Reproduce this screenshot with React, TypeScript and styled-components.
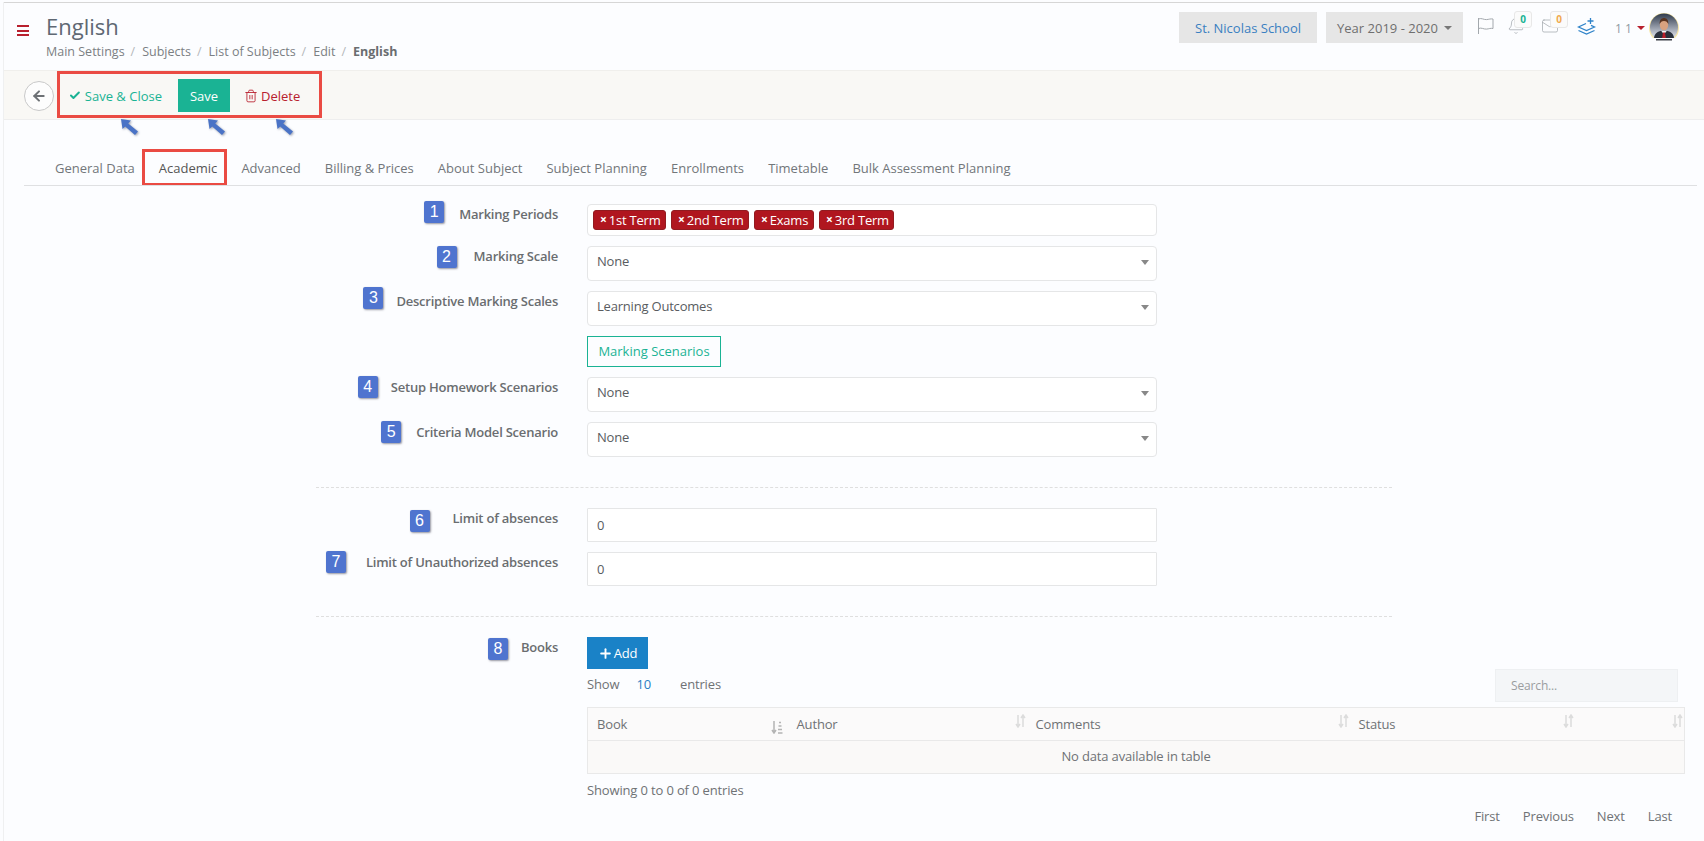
import React from "react";
import styled, { createGlobalStyle } from "styled-components";
import { Check, Trash2, ArrowLeft, Plus, Bell, Mail } from "lucide-react";

const GlobalStyle = createGlobalStyle`
  html, body {
    margin: 0;
    padding: 0;
    height: 100%;
    overflow: hidden;
    background: #fcfdff;
  }
  * { box-sizing: border-box; }
`;

const Page = styled.div`
  width: 1704px;
  height: 841px;
  overflow: hidden;
  position: relative;
  border-left: 1px solid #eff0f1;
  margin-left: 3px;
  margin-top: 2px;
  font-family: "Open Sans", "Liberation Sans", sans-serif;
  font-size: 13px;
  color: #676a6c;
  &::before {
    content: "";
    position: absolute;
    top: 0;
    left: -4px;
    width: 1710px;
    height: 1px;
    background: #d6d6d6;
  }
`;

const Header = styled.header`
  height: 68px;
  padding: 10px 28px 0 13px;
  display: flex;
  justify-content: space-between;
  align-items: flex-start;
`;

const TitleArea = styled.div`
  display: flex;
  gap: 17px;
`;

const Burger = styled.div`
  width: 12px;
  height: 11px;
  margin-top: 13px;
  border-top: 2px solid #b8202e;
  border-bottom: 2px solid #b8202e;
  position: relative;
  &::after {
    content: "";
    position: absolute;
    left: 0;
    right: 0;
    top: 2.5px;
    height: 2px;
    background: #b8202e;
  }
`;

const Title = styled.h1`
  margin: 1px 0 0;
  font-size: 22px;
  font-weight: 400;
  line-height: 27px;
  color: #5f6873;
`;

const Crumbs = styled.div`
  display: flex;
  margin-top: 2px;
  font-size: 12.5px;
  line-height: 20px;
  color: #7b7f83;
`;

const Crumb = styled.span<{ $last?: boolean }>`
  font-weight: ${(p) => (p.$last ? 700 : 400)};
  color: ${(p) => (p.$last ? "#6a6d70" : "#7b7f83")};
  &:not(:last-child)::after {
    content: "/";
    margin: 0 7px 0 6px;
    color: #b5b8bb;
  }
`;

const HeaderRight = styled.div`
  display: flex;
  align-items: flex-start;
`;

const Pill = styled.div<{ $blue?: boolean }>`
  width: ${(p) => (p.$blue ? 138 : 137)}px;
  height: 31px;
  margin-right: 9px;
  background: #e6e6e6;
  display: flex;
  align-items: center;
  justify-content: center;
  gap: 6px;
  color: ${(p) => (p.$blue ? "#3a7fc1" : "#6f6f6f")};
`;

const SmallCaret = styled.span<{ $color?: string }>`
  width: 0;
  height: 0;
  border-left: 4px solid transparent;
  border-right: 4px solid transparent;
  border-top: 4px solid ${(p) => p.$color || "#777"};
`;

const IconSlot = styled.div<{ $w: number; $gap: number }>`
  position: relative;
  width: ${(p) => p.$w}px;
  margin-left: ${(p) => p.$gap}px;
  height: 24px;
  margin-top: 5px;
  color: #a3a8ad;
`;

const Count = styled.span<{ $color: string; $left: number }>`
  position: absolute;
  top: -6px;
  left: ${(p) => p.$left}px;
  width: 18px;
  height: 17px;
  border: 1px solid #e8e8e8;
  border-radius: 3px;
  background: #fbfbfb;
  color: ${(p) => p.$color};
  font-size: 10px;
  font-weight: 700;
  line-height: 15px;
  text-align: center;
`;

const UserMenu = styled.div`
  display: flex;
  align-items: center;
  height: 30px;
  margin-top: 1px;
  margin-left: 19px;
  color: #8f9aa3;
`;

const UserCount = styled.span`
  width: 17px;
  margin-right: 5px;
  font-size: 12px;
  white-space: nowrap;
`;

const AvatarFrame = styled.span`
  margin-left: 4px;
  height: 30px;
`;

const Toolbar = styled.div`
  height: 50px;
  padding-left: 20px;
  background: #f9f8f5;
  border-top: 1px solid #f0efec;
  border-bottom: 1px solid #eeeeee;
  display: flex;
  gap: 3px;
`;

const BackButton = styled.div`
  width: 30px;
  height: 30px;
  margin-top: 10px;
  border: 1px solid #c9c9c9;
  border-radius: 50%;
  background: #fdfdfd;
  color: #6d7175;
  display: flex;
  align-items: center;
  justify-content: center;
`;

const ActionBox = styled.div`
  position: relative;
  width: 265px;
  height: 47px;
  padding: 5px 0 0 9px;
  border: 3px solid #ea4b43;
  display: flex;
  align-items: flex-start;
`;

const LinkAction = styled.div<{ $color: string; $w: number }>`
  width: ${(p) => p.$w}px;
  height: 33px;
  display: flex;
  align-items: center;
  gap: 3px;
  white-space: nowrap;
  color: ${(p) => p.$color};
`;

const CheckMark = styled(Check)`
  margin-right: 1px;
`;

const SaveButton = styled.div`
  width: 52px;
  height: 33px;
  margin: 0 14px 0 16px;
  background: #1ab394;
  color: #fff;
  display: flex;
  align-items: center;
  justify-content: center;
`;

const Pointer = styled.svg<{ $x: number }>`
  position: absolute;
  left: ${(p) => p.$x}px;
  top: 44px;
  filter: drop-shadow(1px 1px 1px rgba(40, 50, 80, 0.45));
`;

const TabBar = styled.nav`
  margin: 29px 10px 0 20px;
  padding-left: 31px;
  height: 37px;
  border-bottom: 1px solid #dfe0e2;
  display: flex;
  gap: 24.1px;
`;

const Tab = styled.div<{ $active?: boolean }>`
  position: relative;
  height: 36px;
  line-height: 38px;
  white-space: nowrap;
  color: ${(p) => (p.$active ? "#555" : "#72767a")};
  ${(p) =>
    p.$active &&
    `&::after {
      content: "";
      position: absolute;
      inset: 0 -10px 0 -17px;
      border: 3px solid #ea4b43;
      border-bottom-width: 2px;
    }`}
`;

const Row = styled.div<{ $top: number }>`
  display: flex;
  margin-top: ${(p) => p.$top}px;
`;

const LabelCell = styled.div`
  width: 554px;
  margin-right: 29px;
  display: flex;
  justify-content: flex-end;
  align-items: flex-start;
`;

const NumberBadge = styled.span<{ $shift: number; $gap: number }>`
  width: 20px;
  height: 22px;
  margin-top: ${(p) => p.$shift}px;
  margin-right: ${(p) => p.$gap}px;
  border-radius: 2px;
  background: #4f74cf;
  box-shadow: 1px 1px 2px rgba(50, 50, 70, 0.5);
  color: #fff;
  font-family: "Liberation Sans", Arial, sans-serif;
  font-size: 16px;
  line-height: 21px;
  text-align: center;
`;

const Label = styled.label`
  font-weight: 600;
  line-height: 20px;
  letter-spacing: -0.22px;
  color: #6a6d70;
  white-space: nowrap;
`;

const Control = styled.div<{ $h: number; $select?: boolean }>`
  position: relative;
  width: 570px;
  height: ${(p) => p.$h}px;
  padding: ${(p) => (p.$select ? "0 0 5px 9px" : "0 0 0 9px")};
  background: #fff;
  border: 1px solid #e5e6e7;
  border-radius: ${(p) => (p.$select ? 4 : 1)}px;
  display: flex;
  align-items: center;
  letter-spacing: -0.2px;
  color: #595c5f;
`;

const SelectCaret = styled(SmallCaret)`
  position: absolute;
  right: 7px;
  top: 13px;
  border-top-width: 5px;
  border-top-color: #888;
`;

const TagList = styled.div`
  display: flex;
  gap: 5px;
  margin: 0 0 -5px -4px;
`;

const Tag = styled.span<{ $w: number }>`
  width: ${(p) => p.$w}px;
  height: 20px;
  padding-left: 6px;
  background: #b0161f;
  border: 1px solid #921b20;
  border-radius: 3px;
  color: #fff;
  line-height: 18px;
  display: flex;
  gap: 2px;
  white-space: nowrap;
  &::before {
    content: "×";
    font-weight: 700;
    font-size: 12px;
  }
`;

const OutlineButton = styled.div`
  width: 134px;
  height: 31px;
  margin-left: 583px;
  padding-bottom: 1px;
  border: 1px solid #1ab394;
  color: #1ab394;
  display: flex;
  align-items: center;
  justify-content: center;
`;

const Divider = styled.hr<{ $top: number }>`
  width: 1076px;
  margin: ${(p) => p.$top}px 0 0 312px;
  border: 0;
  border-top: 1px dashed #dfdfdf;
`;

const BooksPanel = styled.div`
  width: 1097px;
  letter-spacing: -0.15px;
`;

const AddButton = styled.div`
  width: 61px;
  height: 32px;
  background: #1a82c7;
  color: #fff;
  display: flex;
  align-items: center;
  justify-content: center;
  gap: 1px;
`;

const ListTools = styled.div`
  height: 33px;
  padding-right: 6px;
  display: flex;
  align-items: center;
  justify-content: space-between;
`;

const ShowEntries = styled.div`
  display: flex;
  margin-bottom: 4px;
  color: #6f7275;
`;

const PageSize = styled.span`
  margin: 0 29px 0 17px;
  color: #2a7fc4;
`;

const SearchBox = styled.div`
  width: 183px;
  height: 33px;
  padding-left: 15px;
  background: #f4f6f8;
  border: 1px solid #eef0f2;
  color: #9a9da0;
  font-size: 12px;
  display: flex;
  align-items: center;
`;

const BooksTable = styled.table`
  width: 1097px;
  margin-top: 5px;
  border-collapse: collapse;
  table-layout: fixed;
`;

const HeadCell = styled.th<{ $w: number }>`
  position: relative;
  width: ${(p) => p.$w}px;
  height: 33px;
  padding: 0 0 0 9px;
  background: #fbfafa;
  border: 1px solid #e9e9e9;
  border-width: 1px 0;
  font-weight: 400;
  text-align: left;
  color: #6f7275;
  &:first-child { border-left-width: 1px; }
  &:last-child { border-right-width: 1px; }
`;

const SortGlyph = styled.svg<{ $faint?: boolean }>`
  position: absolute;
  right: ${(p) => (p.$faint ? 1 : 5)}px;
  top: ${(p) => (p.$faint ? 6 : 13)}px;
  color: ${(p) => (p.$faint ? "#dcdcdc" : "#b4b4b4")};
`;

const EmptyCell = styled.td`
  height: 33px;
  padding: 0 0 2px;
  background: #faf9f8;
  border: 1px solid #e9e9e9;
  text-align: center;
  color: #6f7275;
`;

const TableInfo = styled.div`
  margin-top: 6px;
  line-height: 20px;
  color: #6f7275;
`;

const Pager = styled.div`
  margin-top: 6px;
  padding-right: 12px;
  line-height: 20px;
  display: flex;
  justify-content: flex-end;
  gap: 23px;
  color: #6f7275;
`;

const FlagIcon = () => (
  <svg width="18" height="18" viewBox="0 0 18 18" fill="none" stroke="currentColor" strokeWidth="1">
    <path d="M1.5 1v16M1.5 2c3-1.4 5 .8 8 .6 2.500-.2 4-1 6.500-.6v9.500c-2.500-.6-4 .4-6.500.6-3 .2-5-1.800-8-.6" />
  </svg>
);

const LayersPlus = () => (
  <svg width="19" height="19" viewBox="0 0 19 19" fill="none" stroke="#2f83c9" strokeWidth="1.3">
    <path d="M9 6.500 1.500 10 9.500 13.500 17.500 10 14 8.300M1.500 13.500l8 3.500 8-3.500M13.500 1v6M10.500 4h6" />
  </svg>
);

const Avatar = () => (
  <svg width="30" height="30" viewBox="0 0 30 30">
    <defs>
      <linearGradient id="avatarSky" x1="0" y1="0" x2="0" y2="1">
        <stop offset="0" stopColor="#2f3a4c" />
        <stop offset="0.75" stopColor="#c9ced8" />
        <stop offset="1" stopColor="#f4f5f8" />
      </linearGradient>
    </defs>
    <circle cx="15" cy="15" r="15" fill="#f7e7a6" />
    <circle cx="15" cy="14.500" r="14" fill="url(#avatarSky)" />
    <path d="M5 25c.6-5.500 5-7.500 10-7.500s9.400 2 10 7.500z" fill="#2a313c" />
    <path d="M12 17.500h6l-3 4z" fill="#f2f2f2" />
    <path d="M14 19.500h2l.8 5.500H13.200z" fill="#b81f2a" />
    <ellipse cx="15" cy="12" rx="4.200" ry="5.200" fill="#d9a27f" />
    <path d="M10.700 11c-.4-4 1.900-6 4.300-6s4.700 2 4.300 6c-1-2-1.900-3-4.300-3s-3.300 1-4.300 3z" fill="#5a3420" />
    <rect x="4" y="25" width="22" height="5" fill="#fcfdff" />
    <rect x="7" y="26" width="16" height="1.500" fill="#3b3f47" />
  </svg>
);

const SortIcon = ({ faint }: { faint?: boolean }) =>
  faint ? (
    <SortGlyph $faint width="11" height="14" viewBox="0 0 11 14" fill="none" stroke="currentColor" strokeWidth="1.500">
      <path d="M3 1v11M1 10l2 3 2-3M8 13V2M6 4l2-3 2 3" />
    </SortGlyph>
  ) : (
    <SortGlyph width="12" height="13" viewBox="0 0 12 13" fill="none" stroke="currentColor" strokeWidth="1.500">
      <path d="M3 0v11M1 9l2 3 2-3M8 1.500h2M7.500 5h3M7 8.500h4M7 12h4.500" />
    </SortGlyph>
  );

const ArrowPointer = ({ x }: { x: number }) => (
  <Pointer $x={x} width="20" height="20" viewBox="0 0 20 20">
    <path d="M1 1 11 2.500 8.200 5.500 18 13.500 15 17 5.200 8.500 2.500 11z" fill="#4a73c6" />
  </Pointer>
);

const headColumns = [
  { name: "Book", w: 200 },
  { name: "Author", w: 239 },
  { name: "Comments", w: 323 },
  { name: "Status", w: 225 },
  { name: "", w: 110 },
];

const tabs = [
  "General Data",
  "Academic",
  "Advanced",
  "Billing & Prices",
  "About Subject",
  "Subject Planning",
  "Enrollments",
  "Timetable",
  "Bulk Assessment Planning",
];

const App: React.FC = () => {
  return (
    <Page>
      <GlobalStyle />
      <Header>
        <TitleArea>
          <Burger />
          <div>
            <Title>English</Title>
            <Crumbs>
              <Crumb>Main Settings</Crumb>
              <Crumb>Subjects</Crumb>
              <Crumb>List of Subjects</Crumb>
              <Crumb>Edit</Crumb>
              <Crumb $last>English</Crumb>
            </Crumbs>
          </div>
        </TitleArea>
        <HeaderRight>
          <Pill $blue>St. Nicolas School</Pill>
          <Pill>
            Year 2019 - 2020 <SmallCaret />
          </Pill>
          <IconSlot $w={18} $gap={5}>
            <FlagIcon />
          </IconSlot>
          <IconSlot $w={18} $gap={12}>
            <Bell size={18} strokeWidth={1} />
            <Count $color="#1ab394" $left={7}>0</Count>
          </IconSlot>
          <IconSlot $w={18} $gap={16}>
            <Mail size={18} strokeWidth={1} />
            <Count $color="#f0a94e" $left={9}>0</Count>
          </IconSlot>
          <IconSlot $w={19} $gap={18}>
            <LayersPlus />
          </IconSlot>
          <UserMenu>
            <UserCount>1 1</UserCount>
            <SmallCaret $color="#b8202e" />
            <AvatarFrame>
              <Avatar />
            </AvatarFrame>
          </UserMenu>
        </HeaderRight>
      </Header>

      <Toolbar>
        <BackButton>
          <ArrowLeft size={16} strokeWidth={3} />
        </BackButton>
        <ActionBox>
          <LinkAction $color="#1ab394" $w={93}>
            <CheckMark size={15} strokeWidth={4} />
            Save &amp; Close
          </LinkAction>
          <SaveButton>Save</SaveButton>
          <LinkAction $color="#b8202e" $w={60}>
            <Trash2 size={14} strokeWidth={1.5} />
            Delete
          </LinkAction>
          <ArrowPointer x={60} />
          <ArrowPointer x={147} />
          <ArrowPointer x={215} />
        </ActionBox>
      </Toolbar>

      <TabBar>
        {tabs.map((t) => (
          <Tab key={t} $active={t === "Academic"}>
            {t}
          </Tab>
        ))}
      </TabBar>

      <Row $top={18}>
        <LabelCell>
          <NumberBadge $shift={-3} $gap={15}>1</NumberBadge>
          <Label>Marking Periods</Label>
        </LabelCell>
        <Control $h={32} $select>
          <TagList>
            <Tag $w={73}>1st Term</Tag>
            <Tag $w={78}>2nd Term</Tag>
            <Tag $w={60}>Exams</Tag>
            <Tag $w={75}>3rd Term</Tag>
          </TagList>
        </Control>
      </Row>

      <Row $top={10}>
        <LabelCell>
          <NumberBadge $shift={0} $gap={17}>2</NumberBadge>
          <Label>Marking Scale</Label>
        </LabelCell>
        <Control $h={35} $select>
          None
          <SelectCaret />
        </Control>
      </Row>

      <Row $top={10}>
        <LabelCell>
          <NumberBadge $shift={-4} $gap={13}>3</NumberBadge>
          <Label>Descriptive Marking Scales</Label>
        </LabelCell>
        <Control $h={35} $select>
          Learning Outcomes
          <SelectCaret />
        </Control>
      </Row>

      <Row $top={10}>
        <OutlineButton>Marking Scenarios</OutlineButton>
      </Row>

      <Row $top={10}>
        <LabelCell>
          <NumberBadge $shift={-1} $gap={13}>4</NumberBadge>
          <Label>Setup Homework Scenarios</Label>
        </LabelCell>
        <Control $h={35} $select>
          None
          <SelectCaret />
        </Control>
      </Row>

      <Row $top={10}>
        <LabelCell>
          <NumberBadge $shift={-1} $gap={15}>5</NumberBadge>
          <Label>Criteria Model Scenario</Label>
        </LabelCell>
        <Control $h={35} $select>
          None
          <SelectCaret />
        </Control>
      </Row>

      <Divider $top={30} />

      <Row $top={20}>
        <LabelCell>
          <NumberBadge $shift={2} $gap={23}>6</NumberBadge>
          <Label>Limit of absences</Label>
        </LabelCell>
        <Control $h={34}>0</Control>
      </Row>

      <Row $top={10}>
        <LabelCell>
          <NumberBadge $shift={-1} $gap={20}>7</NumberBadge>
          <Label>Limit of Unauthorized absences</Label>
        </LabelCell>
        <Control $h={34}>0</Control>
      </Row>

      <Divider $top={30} />

      <Row $top={20}>
        <LabelCell>
          <NumberBadge $shift={1} $gap={13}>8</NumberBadge>
          <Label>Books</Label>
        </LabelCell>
        <BooksPanel>
          <AddButton>
            <Plus size={15} strokeWidth={3} />
            Add
          </AddButton>
          <ListTools>
            <ShowEntries>
              Show
              <PageSize>10</PageSize>
              entries
            </ShowEntries>
            <SearchBox>Search...</SearchBox>
          </ListTools>
          <BooksTable>
            <thead>
              <tr>
                {headColumns.map((c, i) => (
                  <HeadCell key={i} $w={c.w}>
                    {c.name}
                    <SortIcon faint={i > 0} />
                  </HeadCell>
                ))}
              </tr>
            </thead>
            <tbody>
              <tr>
                <EmptyCell colSpan={5}>No data available in table</EmptyCell>
              </tr>
            </tbody>
          </BooksTable>
          <TableInfo>Showing 0 to 0 of 0 entries</TableInfo>
          <Pager>
            <span>First</span>
            <span>Previous</span>
            <span>Next</span>
            <span>Last</span>
          </Pager>
        </BooksPanel>
      </Row>
    </Page>
  );
};

export default App;
